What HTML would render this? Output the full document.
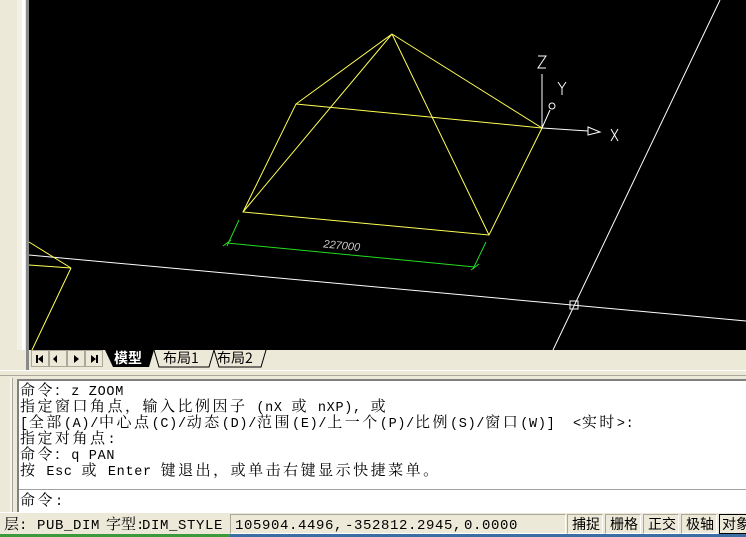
<!DOCTYPE html>
<html><head><meta charset="utf-8"><style>
*{margin:0;padding:0;box-sizing:border-box}
body{width:746px;height:537px;overflow:hidden;background:#ece9d8;position:relative;font-family:"Liberation Mono","Noto Sans CJK SC",monospace}
.abs{position:absolute}
.cmd{left:17px;top:379px;width:729px;height:133px;background:#fff;border-left:2px solid #808080;border-top:2px solid #808080}
.ln{position:absolute;left:1px;font-size:15px;letter-spacing:2.5px;line-height:16px;white-space:pre;color:#000;font-family:"Noto Serif CJK SC","Noto Sans CJK SC",serif}
.ln s{text-decoration:none;font-family:"Liberation Mono",monospace;font-size:13.5px;letter-spacing:0.7px}
.st s{text-decoration:none;font-family:"Liberation Mono",monospace;font-size:14px;letter-spacing:0.6px}
.st{top:513px;height:21px;font-size:15px;letter-spacing:0px;line-height:21px;white-space:pre;font-family:"Noto Serif CJK SC","Noto Sans CJK SC",serif}
.btn{top:514px;height:20px;border:1px solid #aca899;border-right-color:#fff;border-bottom-color:#fff;font-size:14px;line-height:18px;padding-left:4px;font-family:"Noto Sans CJK SC",sans-serif;overflow:hidden;white-space:nowrap}
</style></head><body>
<div class="abs" style="left:17px;top:0;width:5px;height:350px;background:#f3f1e6"></div>
<div class="abs" style="left:22px;top:0;width:3px;height:350px;background:#fff"></div>
<div class="abs" style="left:26px;top:0;width:3px;height:370px;background:#8a8a8a"></div>
<div class="abs" style="left:29px;top:0;width:717px;height:350px;background:#000"></div>
<svg class="abs" style="left:0;top:0" width="746" height="350" viewBox="0 0 746 350">
<g stroke="#fff" stroke-width="1" fill="none">
<line x1="29" y1="255" x2="746" y2="321"/>
<line x1="720" y1="0" x2="553" y2="350"/>
<rect x="570" y="301" width="8" height="8"/>
<line x1="542" y1="128" x2="542" y2="74"/>
<line x1="542" y1="128" x2="550" y2="110"/>
<circle cx="552" cy="106" r="3"/>
<line x1="542" y1="128" x2="588" y2="131"/>
<polygon points="588,127 600,132 588,135"/>
<polyline points="538,56 546,56 538,68 546,68"/>
<polyline points="558,82 562,88 566,82"/><line x1="562" y1="88" x2="562" y2="95"/>
<line x1="611" y1="129" x2="618" y2="141"/><line x1="618" y1="129" x2="611" y2="141"/>
</g>
<g stroke="#ffff55" stroke-width="1" fill="none">
<polygon points="296,104 542,128 489,235 243,212"/>
<line x1="392" y1="34" x2="296" y2="104"/>
<line x1="392" y1="34" x2="542" y2="128"/>
<line x1="392" y1="34" x2="243" y2="212"/>
<line x1="392" y1="34" x2="489" y2="235"/>
<line x1="29" y1="242" x2="71" y2="268"/>
<line x1="29" y1="265" x2="71" y2="268"/>
<line x1="71" y1="268" x2="32" y2="350"/>
</g>
<g stroke="#22dd22" stroke-width="1" fill="none">
<line x1="227" y1="243" x2="475" y2="267"/>
<line x1="239" y1="220" x2="227" y2="246"/>
<line x1="486" y1="242" x2="473" y2="269"/>
<line x1="223" y1="246" x2="231" y2="240"/>
<line x1="471" y1="270" x2="479" y2="264"/>
</g>
<text x="323" y="250" fill="#ccc" font-size="11" font-style="italic" font-family="Liberation Sans" transform="rotate(5.5 350 250)">227000</text>
</svg>
<div class="abs" style="left:29px;top:350px;width:717px;height:18px;background:#ece9d8"></div>
<svg class="abs" style="left:29px;top:350px" width="250" height="18">
<g fill="#ece9d8" stroke="#aca899"><rect x="2.5" y="0.5" width="17" height="16"/><rect x="20.5" y="0.5" width="17" height="16"/><rect x="38.5" y="0.5" width="17" height="16"/><rect x="56.5" y="0.5" width="17" height="16"/></g>
<g fill="#000"><rect x="7" y="5" width="2" height="8"/><polygon points="14,5 14,13 9,9"/><polygon points="28,5 28,13 24,9"/><polygon points="45,5 45,13 50,9"/><polygon points="62,5 62,13 67,9"/><rect x="67" y="5" width="2" height="8"/></g>
<polygon points="76,0 125,0 120,17 84,17" fill="#000"/>
<polyline points="125,0 130,17 180,17 185,0" fill="none" stroke="#000"/>
<polyline points="185,0 190,17 232,17 237,0" fill="none" stroke="#000"/>
</svg>
<div class="abs" style="left:114px;top:349px;font-size:14px;font-weight:bold;color:#fff;font-family:'Noto Sans CJK SC',sans-serif;line-height:18px">模型</div>
<div class="abs" style="left:163px;top:349px;font-size:14px;color:#000;font-family:'Noto Sans CJK SC',sans-serif;line-height:18px">布局1</div>
<div class="abs" style="left:217px;top:349px;font-size:14px;color:#000;font-family:'Noto Sans CJK SC',sans-serif;line-height:18px">布局2</div>
<div class="abs" style="left:0;top:370px;width:746px;height:1px;background:#fff"></div>
<div class="abs" style="left:0;top:375px;width:746px;height:1px;background:#aca899"></div>
<div class="abs" style="left:10px;top:378px;width:3px;height:134px;background:#f5f4ee;border-right:1px solid #aca899"></div>
<div class="abs cmd">
<div class="ln" style="top:1px">命令:<s> z ZOOM</s></div>
<div class="ln" style="top:17px">指定窗口角点，输入比例因子<s> (nX </s>或<s> nXP), </s>或</div>
<div class="ln" style="top:33px"><s>[</s>全部<s>(A)/</s>中心点<s>(C)/</s>动态<s>(D)/</s>范围<s>(E)/</s>上一个<s>(P)/</s>比例<s>(S)/</s>窗口<s>(W)]  &lt;</s>实时<s>&gt;:</s></div>
<div class="ln" style="top:49px">指定对角点<s>:</s></div>
<div class="ln" style="top:65px">命令:<s> q PAN</s></div>
<div class="ln" style="top:81px">按<s> Esc </s>或<s> Enter </s>键退出，或单击右键显示快捷菜单。</div>
<div class="abs" style="left:0;top:108px;width:729px;height:1px;background:#a0a0a0"></div>
<div class="ln" style="top:111px">命令<s>:</s></div>
</div>
<div class="abs" style="left:0;top:512px;width:746px;height:1px;background:#fff"></div>
<div class="abs st" style="left:4px">层<s>:</s></div>
<div class="abs st" style="left:37px"><s>PUB_DIM</s></div>
<div class="abs st" style="left:106px">字型<s>:</s></div>
<div class="abs st" style="left:142px"><s>DIM_STYLE</s></div>
<div class="abs" style="left:230px;top:514px;width:336px;height:20px;border:1px solid #aca899;border-right-color:#fff;border-bottom-color:#fff"></div>
<div class="abs st" style="left:235px"><s>105904.4496,</s></div>
<div class="abs st" style="left:345px"><s>-352812.2945,</s></div>
<div class="abs st" style="left:464px"><s>0.0000</s></div>
<div class="abs btn" style="left:567px;width:36px">捕捉</div>
<div class="abs btn" style="left:605px;width:36px">栅格</div>
<div class="abs btn" style="left:643px;width:36px">正交</div>
<div class="abs btn" style="left:681px;width:36px">极轴</div>
<div class="abs btn" style="left:719px;width:30px;border-color:#000;padding-left:2px">对象</div>
<div class="abs" style="left:0;top:534px;width:746px;height:3px;background:#3a6ea5"></div>
<div class="abs" style="left:0;top:534px;width:230px;height:3px;background:#3c9a3c"></div>
</body></html>
